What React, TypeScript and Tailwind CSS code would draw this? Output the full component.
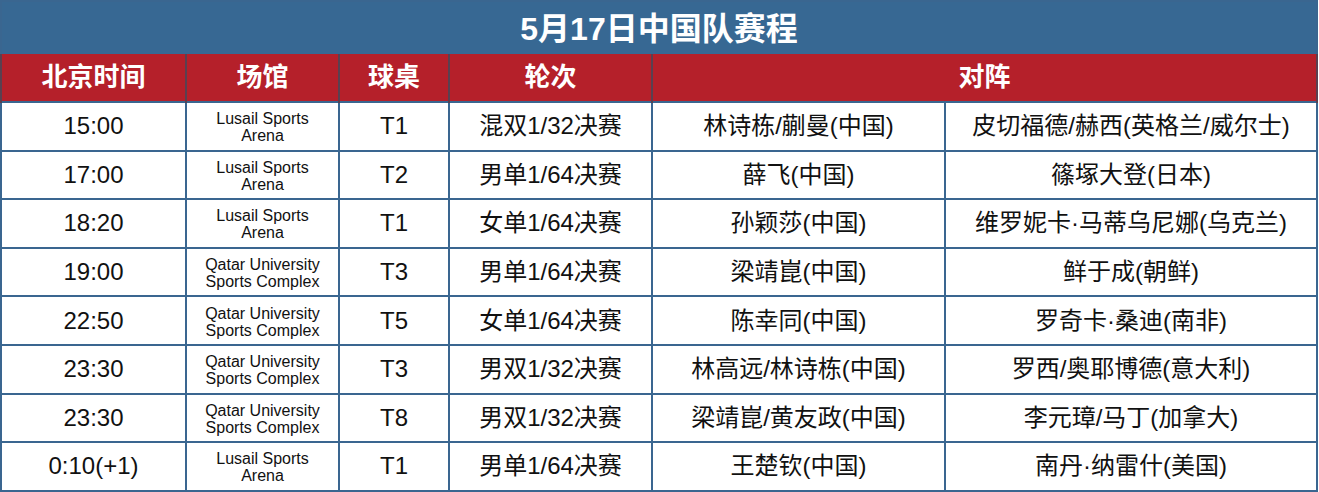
import React from "react";

interface IMatch {
  time: string;
  venue: string[];
  table: string;
  round: string;
  china: string;
  opponent: string;
}

const matches: IMatch[] = [
  { time: "15:00", venue: ["Lusail Sports", "Arena"], table: "T1", round: "混双1/32决赛", china: "林诗栋/蒯曼(中国)", opponent: "皮切福德/赫西(英格兰/威尔士)" },
  { time: "17:00", venue: ["Lusail Sports", "Arena"], table: "T2", round: "男单1/64决赛", china: "薛飞(中国)", opponent: "篠塚大登(日本)" },
  { time: "18:20", venue: ["Lusail Sports", "Arena"], table: "T1", round: "女单1/64决赛", china: "孙颖莎(中国)", opponent: "维罗妮卡·马蒂乌尼娜(乌克兰)" },
  { time: "19:00", venue: ["Qatar University", "Sports Complex"], table: "T3", round: "男单1/64决赛", china: "梁靖崑(中国)", opponent: "鲜于成(朝鲜)" },
  { time: "22:50", venue: ["Qatar University", "Sports Complex"], table: "T5", round: "女单1/64决赛", china: "陈幸同(中国)", opponent: "罗奇卡·桑迪(南非)" },
  { time: "23:30", venue: ["Qatar University", "Sports Complex"], table: "T3", round: "男双1/32决赛", china: "林高远/林诗栋(中国)", opponent: "罗西/奥耶博德(意大利)" },
  { time: "23:30", venue: ["Qatar University", "Sports Complex"], table: "T8", round: "男双1/32决赛", china: "梁靖崑/黄友政(中国)", opponent: "李元璋/马丁(加拿大)" },
  { time: "0:10(+1)", venue: ["Lusail Sports", "Arena"], table: "T1", round: "男单1/64决赛", china: "王楚钦(中国)", opponent: "南丹·纳雷什(美国)" },
];

const headers = ["北京时间", "场馆", "球桌", "轮次"];

function App() {
  return (
    <div className="w-[1318px] bg-white font-['Liberation_Sans','Noto_Sans_CJK_SC',sans-serif] text-[#111]">
      <table className="w-full table-fixed border-collapse border-2 border-[#3a6690]">
        <colgroup>
          <col className="w-[185px]" />
          <col className="w-[153px]" />
          <col className="w-[110px]" />
          <col className="w-[203px]" />
          <col className="w-[293px]" />
          <col />
        </colgroup>
        <thead>
          <tr className="h-[53px] bg-[#376893]">
            <th colSpan={6} className="pt-[2px] text-[32px] font-bold text-white">
              5月17日中国队赛程
            </th>
          </tr>
          <tr className="h-[48px] bg-[#b5202a] text-[26px] font-bold text-white">
            {headers.map((h) => (
              <th key={h} className="border-x-2 border-[#5a4050]">
                {h}
              </th>
            ))}
            <th colSpan={2} className="border-x-2 border-[#5a4050]">
              对阵
            </th>
          </tr>
        </thead>
        <tbody className="text-center text-[24px]">
          {matches.map((m, i) => (
            <tr key={i} className="h-[48.6px]">
              <td className="border-2 border-[#3a6690]">{m.time}</td>
              <td className="border-2 border-[#3a6690] pt-[2px] text-[16px] leading-[17px]">
                {m.venue.map((v) => (
                  <div key={v}>{v}</div>
                ))}
              </td>
              <td className="border-2 border-[#3a6690]">{m.table}</td>
              <td className="border-2 border-[#3a6690]">{m.round}</td>
              <td className="border-2 border-[#3a6690]">{m.china}</td>
              <td className="border-2 border-[#3a6690]">{m.opponent}</td>
            </tr>
          ))}
        </tbody>
      </table>
    </div>
  );
}

export default App;
